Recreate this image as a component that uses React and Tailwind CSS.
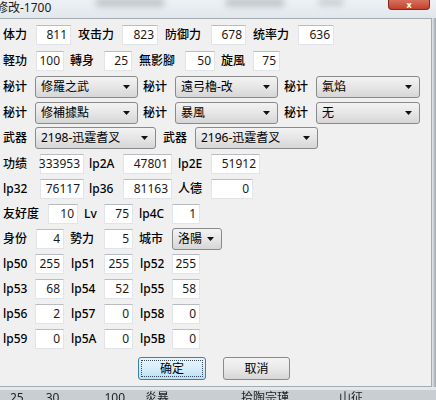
import React from "react";

const Lbl = ({ className = "", children }) => (
  <div className={`shrink-0 whitespace-nowrap text-[12px] leading-none font-medium text-black ${className}`}>{children}</div>
);

const Box = ({ className = "", children }) => (
  <div
    className={`h-[20px] shrink-0 flex items-center justify-end pr-[3px] bg-white border border-[#e1e5ea] border-t-[#b9bdc3] text-[12px] leading-none text-[#1a1a1a] ${className}`}
  >
    {children}
  </div>
);

const Combo = ({ className = "", children }) => (
  <div
    className={`h-[22px] shrink-0 flex items-center pl-[5px] pr-[7px] rounded-[3px] border border-[#8a8a8a] bg-gradient-to-b from-[#f3f3f3] via-[#e6e6e6] to-[#d6d6d6] text-[12px] leading-[16px] text-black ${className}`}
  >
    <span className="flex-1 whitespace-nowrap">{children}</span>
    <svg width="7" height="4" viewBox="0 0 7 4" className="shrink-0">
      <path d="M0 0h7L3.5 4z" fill="#111" />
    </svg>
  </div>
);

const Row = ({ className = "h-[25px]", children }) => (
  <div className={`flex items-center ${className}`}>{children}</div>
);

export default function App() {
  return (
    <div className="w-[436px] h-[400px] overflow-hidden flex flex-col bg-[#dfe4ea] font-['Noto_Sans','Noto_Sans_CJK_SC',sans-serif]">
      {/* glass title bar */}
      <div className="relative h-[18px] shrink-0 flex items-start bg-gradient-to-b from-[#eef1f4] to-[#e2e7ec]">
        <div className="absolute left-[95px] top-[-2px] w-[70px] h-[9px] rounded-full bg-[#9aa0a6] opacity-50 blur-[3px]" />
        <div className="absolute left-[225px] top-[-2px] w-[60px] h-[9px] rounded-full bg-[#9aa0a6] opacity-50 blur-[3px]" />
        <div className="absolute left-[318px] top-[-2px] w-[26px] h-[8px] rounded-full bg-[#9aa0a6] opacity-40 blur-[3px]" />
        <span className="relative -ml-[4px] mt-[1px] text-[12px] leading-[14px] text-[#1b1b1b]">修改-1700</span>
        <div className="relative ml-auto mr-[6px] w-[42px] h-[10px] rounded-b-[4px] border border-t-0 border-[#7d2a22] bg-gradient-to-b from-[#d8705e] to-[#c2402c] flex items-end justify-center">
          <span className="text-[9px] leading-[9px] font-bold text-white">x</span>
        </div>
      </div>

      <div className="flex shrink-0">
        {/* client area */}
        <div className="w-[432px] h-[369px] shrink-0 bg-[#f0f0f0] border-t border-r border-b border-[#a3abb3] pt-[3px]">
          <Row className="h-[26px]">
            <Lbl className="w-[36px] pl-[3px]">体力</Lbl>
            <Box className="w-[35px]">811</Box>
            <Lbl className="w-[51px] pl-[7px]">攻击力</Lbl>
            <Box className="w-[36px]">823</Box>
            <Lbl className="w-[53px] pl-[7px]">防御力</Lbl>
            <Box className="w-[35px]">678</Box>
            <Lbl className="w-[52px] pl-[7px]">统率力</Lbl>
            <Box className="w-[36px]">636</Box>
          </Row>
          <Row className="h-[26px]">
            <Lbl className="w-[36px] pl-[3px]">軽功</Lbl>
            <Box className="w-[28px]">100</Box>
            <Lbl className="w-[40px] pl-[6px]">轉身</Lbl>
            <Box className="w-[28px]">25</Box>
            <Lbl className="w-[53px] pl-[7px]">無影腳</Lbl>
            <Box className="w-[30px]">50</Box>
            <Lbl className="w-[38px] pl-[6px]">旋風</Lbl>
            <Box className="w-[27px]">75</Box>
          </Row>
          <Row className="h-[26px]">
            <Lbl className="w-[35px] pl-[3px]">秘计</Lbl>
            <Combo className="w-[103px]">修羅之武</Combo>
            <Lbl className="w-[37px] pl-[5px]">秘计</Lbl>
            <Combo className="w-[103px]">遠弓櫓-改</Combo>
            <Lbl className="w-[38px] pl-[6px]">秘计</Lbl>
            <Combo className="w-[104px]">氣焰</Combo>
          </Row>
          <Row className="h-[25px]">
            <Lbl className="w-[35px] pl-[3px]">秘计</Lbl>
            <Combo className="w-[103px]">修補據點</Combo>
            <Lbl className="w-[37px] pl-[5px]">秘计</Lbl>
            <Combo className="w-[103px]">暴風</Combo>
            <Lbl className="w-[38px] pl-[6px]">秘计</Lbl>
            <Combo className="w-[104px]">无</Combo>
          </Row>
          <Row className="h-[26px]">
            <Lbl className="w-[35px] pl-[3px]">武器</Lbl>
            <Combo className="w-[121px]">2198-迅霆耆叉</Combo>
            <Lbl className="w-[39px] pl-[7px]">武器</Lbl>
            <Combo className="w-[123px]">2196-迅霆耆叉</Combo>
          </Row>
          <Row>
            <Lbl className="w-[40px] pl-[3px]">功绩</Lbl>
            <Box className="w-[44px]">333953</Box>
            <Lbl className="w-[39px] pl-[5px]">lp2A</Lbl>
            <Box className="w-[49px]">47801</Box>
            <Lbl className="w-[39px] pl-[6px]">lp2E</Lbl>
            <Box className="w-[49px]">51912</Box>
          </Row>
          <Row>
            <Lbl className="w-[40px] pl-[3px]">lp32</Lbl>
            <Box className="w-[44px]">76117</Box>
            <Lbl className="w-[39px] pl-[5px]">lp36</Lbl>
            <Box className="w-[49px]">81163</Box>
            <Lbl className="w-[39px] pl-[6px]">人德</Lbl>
            <Box className="w-[42px]">0</Box>
          </Row>
          <Row>
            <Lbl className="w-[48px] pl-[3px]">友好度</Lbl>
            <Box className="w-[30px]">10</Box>
            <Lbl className="w-[26px] pl-[6px]">Lv</Lbl>
            <Box className="w-[29px]">75</Box>
            <Lbl className="w-[39px] pl-[6px]">lp4C</Lbl>
            <Box className="w-[28px]">1</Box>
          </Row>
          <Row>
            <Lbl className="w-[36px] pl-[3px]">身份</Lbl>
            <Box className="w-[28px]">4</Box>
            <Lbl className="w-[40px] pl-[6px]">勢力</Lbl>
            <Box className="w-[29px]">5</Box>
            <Lbl className="w-[39px] pl-[6px]">城市</Lbl>
            <Combo className="w-[50px]">洛陽</Combo>
          </Row>
          <Row>
            <Lbl className="w-[35px] pl-[3px]">lp50</Lbl>
            <Box className="w-[29px]">255</Box>
            <Lbl className="w-[40px] pl-[7px]">lp51</Lbl>
            <Box className="w-[29px]">255</Box>
            <Lbl className="w-[39px] pl-[7px]">lp52</Lbl>
            <Box className="w-[28px]">255</Box>
          </Row>
          <Row>
            <Lbl className="w-[35px] pl-[3px]">lp53</Lbl>
            <Box className="w-[29px]">68</Box>
            <Lbl className="w-[40px] pl-[7px]">lp54</Lbl>
            <Box className="w-[29px]">52</Box>
            <Lbl className="w-[39px] pl-[7px]">lp55</Lbl>
            <Box className="w-[28px]">58</Box>
          </Row>
          <Row>
            <Lbl className="w-[35px] pl-[3px]">lp56</Lbl>
            <Box className="w-[29px]">2</Box>
            <Lbl className="w-[40px] pl-[7px]">lp57</Lbl>
            <Box className="w-[29px]">0</Box>
            <Lbl className="w-[39px] pl-[7px]">lp58</Lbl>
            <Box className="w-[28px]">0</Box>
          </Row>
          <Row>
            <Lbl className="w-[35px] pl-[3px]">lp59</Lbl>
            <Box className="w-[29px]">0</Box>
            <Lbl className="w-[40px] pl-[7px]">lp5A</Lbl>
            <Box className="w-[29px]">0</Box>
            <Lbl className="w-[39px] pl-[7px]">lp5B</Lbl>
            <Box className="w-[28px]">0</Box>
          </Row>

          <div className="flex mt-[6px] pl-[138px] gap-[17px]">
            <button className="w-[68px] h-[23px] p-[2px] rounded-[3px] border border-[#3c7fb1] bg-gradient-to-b from-[#e8f5fc] via-[#d6eefb] to-[#b9e0f5]">
              <div className="w-full h-full flex items-center justify-center border border-dotted border-[#3a4a5a] text-[12px] leading-none text-black">
                确定
              </div>
            </button>
            <button className="w-[67px] h-[23px] rounded-[3px] border border-[#8a8a8a] bg-gradient-to-b from-[#f4f4f4] via-[#e9e9e9] to-[#d6d6d6] flex items-center justify-center text-[12px] leading-none text-black">
              取消
            </button>
          </div>
        </div>
        {/* right glass frame */}
        <div className="flex-1 bg-gradient-to-r from-[#e3e8ed] to-[#9ea4aa]" />
      </div>

      {/* bottom frame and blurred window behind */}
      <div className="h-[3px] shrink-0 bg-[#e4e8ec]" />
      <div className="flex-1 flex items-end bg-[#c9ced3] text-[12px] leading-none text-[#222] blur-[0.6px]">
        <span className="ml-[10px] -mb-[4px]">25</span>
        <span className="ml-[22px] -mb-[4px]">30</span>
        <span className="ml-[45px] -mb-[4px]">100</span>
        <span className="ml-[20px] -mb-[4px]">炎暴</span>
        <span className="ml-[72px] -mb-[4px]">拾陶宗瑾</span>
        <span className="ml-[50px] -mb-[4px]">山征</span>
      </div>
    </div>
  );
}
